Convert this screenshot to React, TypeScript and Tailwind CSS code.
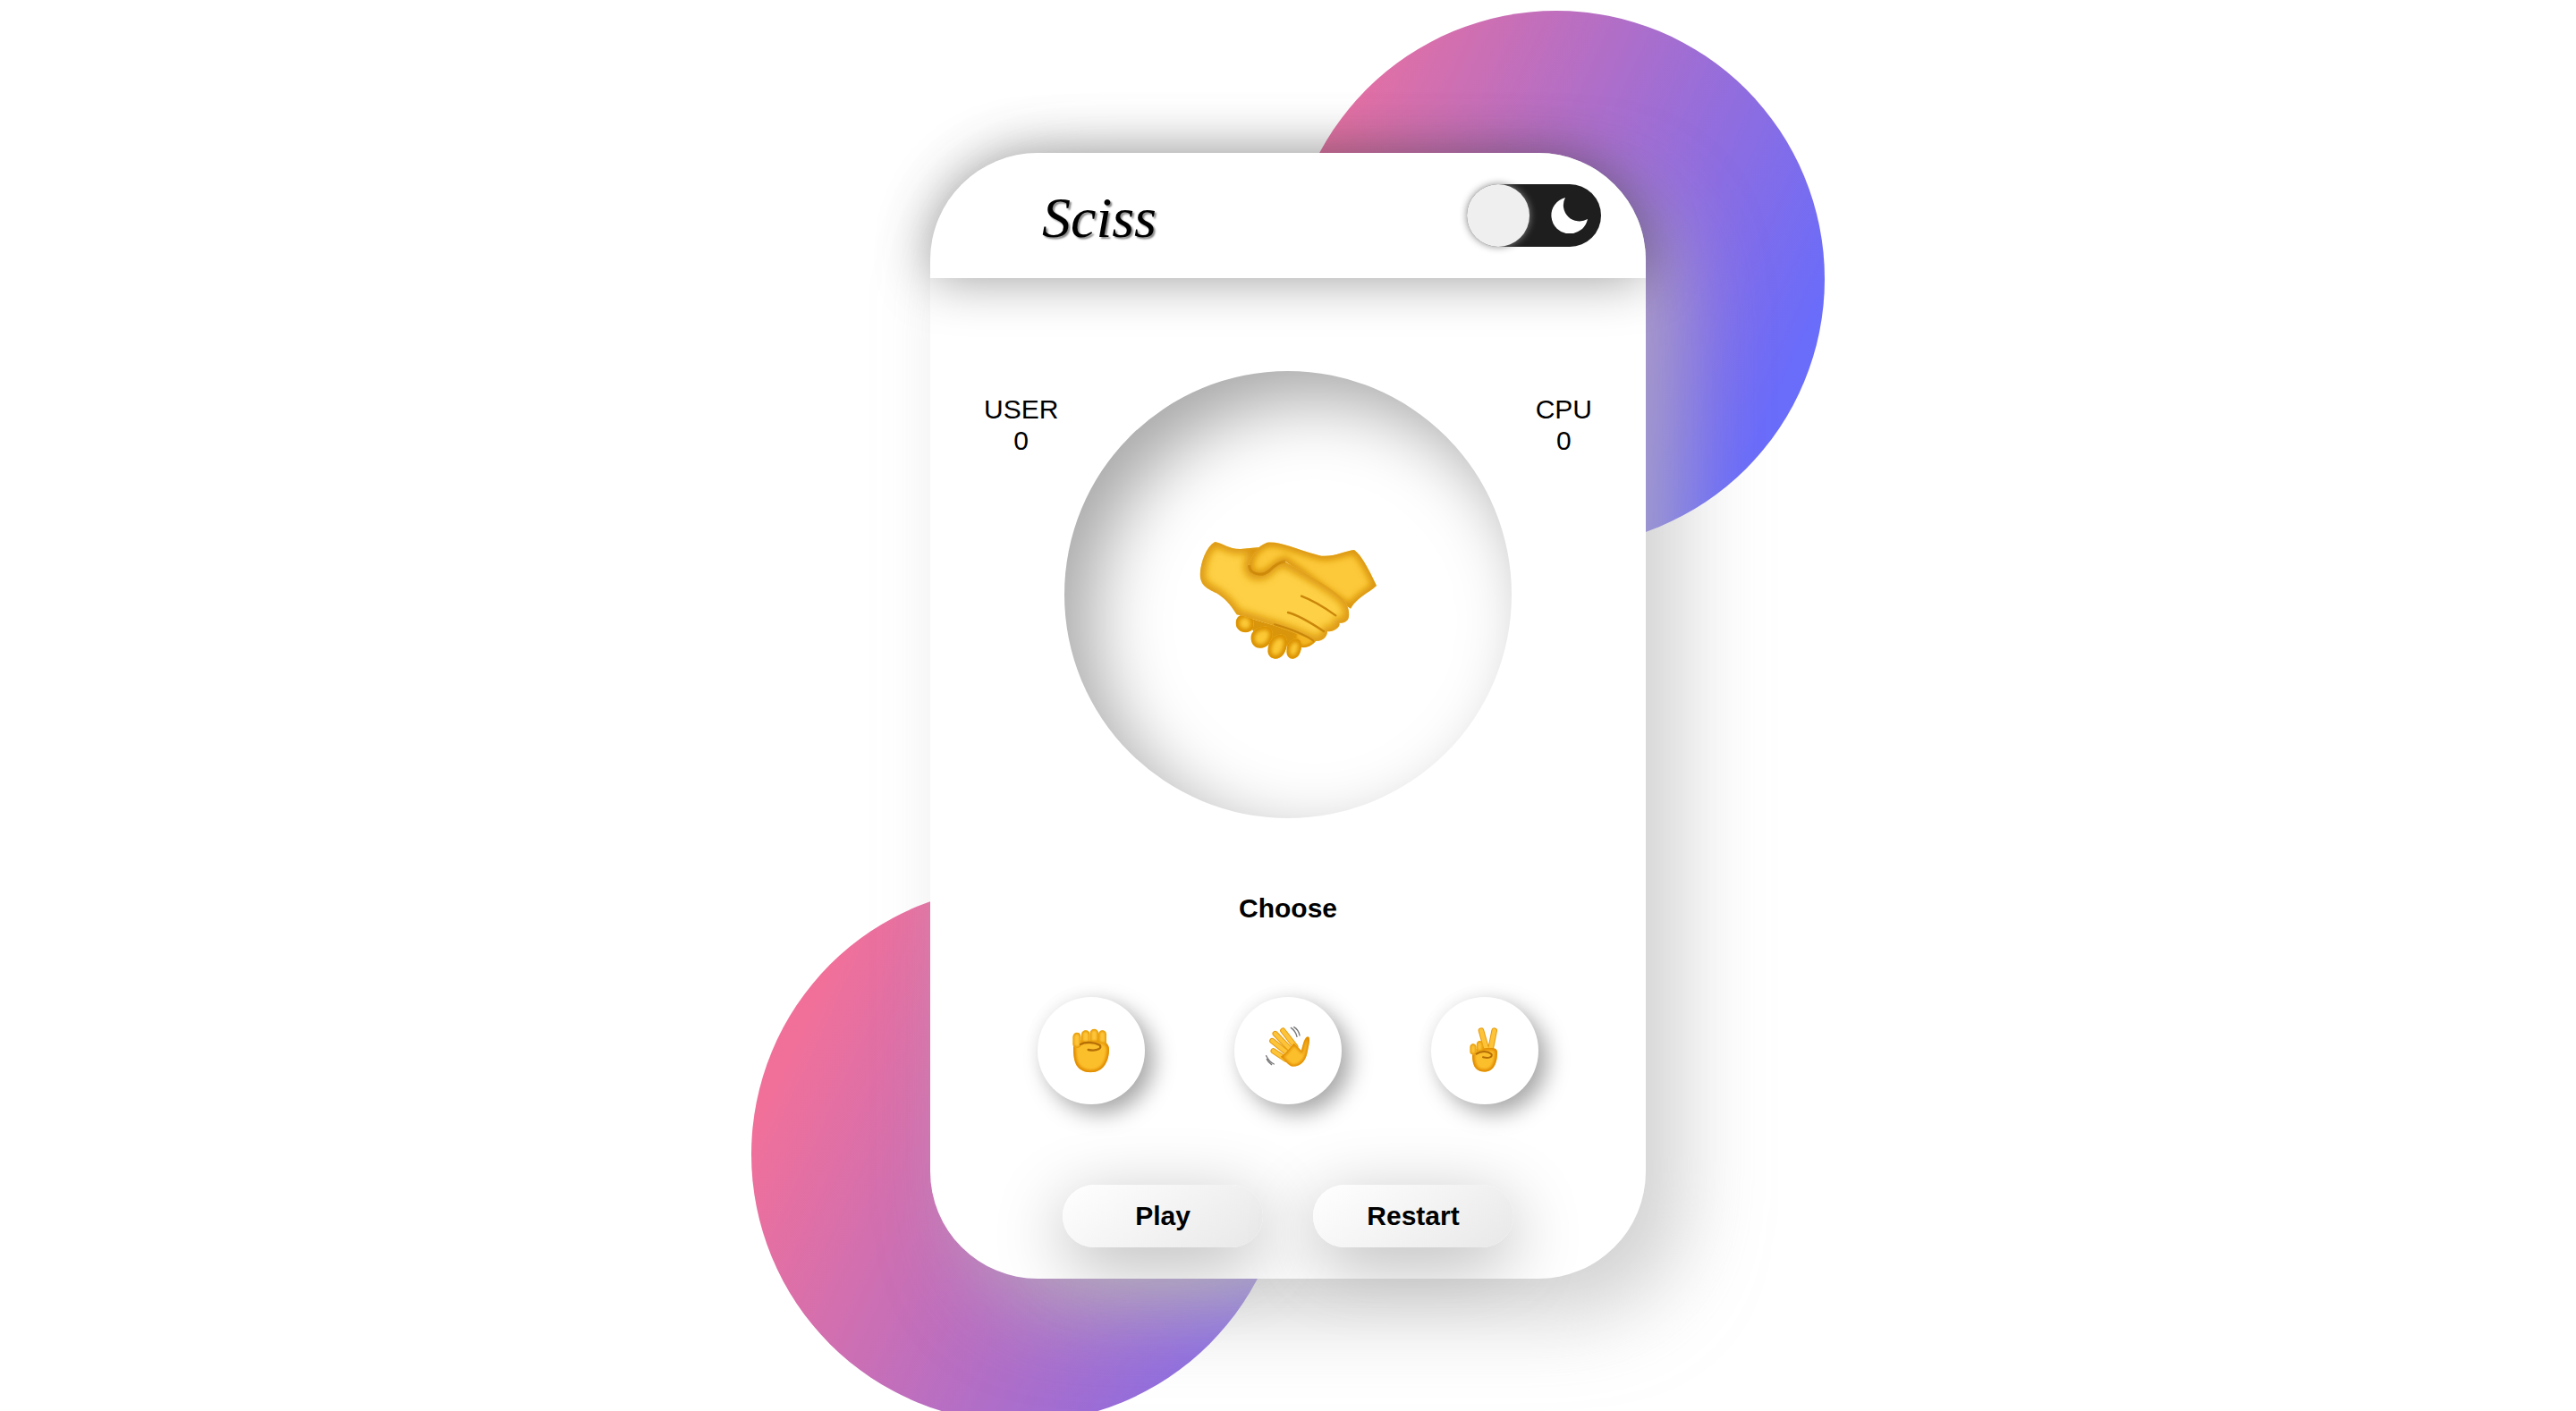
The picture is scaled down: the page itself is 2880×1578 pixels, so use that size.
import { useId } from "react";

// soft edged emoji part: flat fill with a blurred darker rim, clipped to the shape
function Soft({ d, fill = "#fcc935", rim = "#d98f06", width = 16, blur = 5 }: { d: string; fill?: string; rim?: string; width?: number; blur?: number }) {
  const id = useId().replace(/[^a-zA-Z0-9]/g, "");
  return (
    <g>
      <defs>
        <clipPath id={`c${id}`}>
          <path d={d} />
        </clipPath>
        <filter id={`f${id}`} x="-30%" y="-30%" width="160%" height="160%">
          <feGaussianBlur stdDeviation={blur} />
        </filter>
      </defs>
      <path d={d} fill={fill} />
      <g clipPath={`url(#c${id})`}>
        <path d={d} fill="none" stroke={rim} strokeWidth={width} filter={`url(#f${id})`} />
      </g>
    </g>
  );
}

function Handshake() {
  return (
    <svg width="200" height="140" viewBox="0 0 600 420" className="mt-[10px]">
      <path d="M140 265 L345 325 L335 375 L240 355 L190 325Z" fill="#d9960c" />
      <Soft d="M330 300 L400 335 C395 360 365 375 345 372 L320 340Z" width={14} blur={5} fill="#f4b622" />
      <Soft d="M125 290 C125 268 145 258 165 262 C185 268 190 295 180 312 C165 330 125 322 125 290Z" width={24} blur={7} />
      <Soft d="M176 345 C172 315 205 298 232 303 C255 310 252 340 235 362 C215 382 180 378 176 345Z" width={24} blur={7} />
      <Soft d="M232 385 C232 350 255 325 282 330 C305 338 298 375 285 395 C268 418 235 415 232 385Z" width={24} blur={7} />
      <Soft d="M295 385 C295 355 315 338 335 345 C352 355 345 385 335 400 C320 418 295 412 295 385Z" width={22} blur={7} />
      <Soft d="M170 90 C175 60 195 35 230 20 C270 15 320 40 400 62 C440 75 490 48 522 45 C550 65 575 120 597 165 C570 190 530 205 510 242 L420 180 L290 82 C265 85 245 120 215 128 C185 135 165 118 170 90Z" fill="#fcc93a" rim="#da9408" width={30} blur={11} />
      <Soft d="M55 18 C80 22 100 42 140 42 L205 36 C180 60 165 90 170 110 C180 135 215 135 235 115 C250 100 262 85 290 85 C350 120 430 160 480 205 C505 230 510 265 500 280 C490 292 480 290 472 290 C478 305 450 322 432 318 C432 340 410 355 385 350 C350 335 290 310 250 298 C205 285 160 268 128 262 C105 225 85 205 60 190 C30 175 5 165 5 125 C8 85 25 35 55 18Z" fill="#fed045" rim="#da9408" width={32} blur={12} />
      <path d="M170 100 C172 125 210 138 238 114 C252 100 265 88 288 84" stroke="#c98406" strokeWidth="9" strokeLinecap="round" fill="none" opacity="0.8" />
      <path d="M345 200 C385 215 425 240 460 265" stroke="#c9860a" strokeWidth="7" strokeLinecap="round" fill="none" />
      <path d="M300 255 C340 265 385 295 420 318" stroke="#c9860a" strokeWidth="7" strokeLinecap="round" fill="none" />
      <path d="M255 295 C290 305 350 325 385 350" stroke="#c9860a" strokeWidth="6" strokeLinecap="round" fill="none" />
    </svg>
  );
}

function Fist() {
  return (
    <svg width="60" height="70" viewBox="0 0 180 210">
      <Soft d="M30 90 C30 130 32 176 88 178 C132 178 150 140 150 100 C150 85 138 72 120 72 L50 70Z" fill="#fcbf2c" rim="#e08a04" width={16} blur={5} />
      <Soft d="M28 62 C28 40 55 38 56 60 L56 88 C52 100 30 98 28 84Z" fill="#fdc43a" rim="#e49604" width={9} blur={2.5} />
      <Soft d="M57 50 C58 32 85 32 86 50 L86 78 L57 78Z" fill="#fdc43a" rim="#e49604" width={9} blur={2.5} />
      <Soft d="M86 46 C87 28 113 28 114 46 L114 76 L86 76Z" fill="#fdc43a" rim="#e49604" width={9} blur={2.5} />
      <Soft d="M114 50 C115 32 140 32 141 50 L141 84 L114 78Z" fill="#fdc43a" rim="#e49604" width={9} blur={2.5} />
      <path d="M54 84 C70 74 100 76 118 86 C128 96 112 108 80 102" stroke="#b46e06" strokeWidth="7" strokeLinecap="round" fill="none" />
    </svg>
  );
}

function Wave() {
  const fingers = [
    [88, 38, 130, 92],
    [62, 48, 112, 100],
    [52, 72, 104, 114],
    [56, 106, 98, 134],
  ];
  return (
    <svg width="70" height="70" viewBox="0 0 210 210">
      {fingers.map((f) => (
        <line key={f[0] * f[1]} x1={f[0]} y1={f[1]} x2={f[2]} y2={f[3]} stroke="#e59a0c" strokeWidth="19" strokeLinecap="round" />
      ))}
      {fingers.map((f) => (
        <line key={f[1] * f[2]} x1={f[0]} y1={f[1]} x2={f[2]} y2={f[3]} stroke="#fdc43a" strokeWidth="13" strokeLinecap="round" />
      ))}
      <Soft d="M95 115 L125 80 L150 105 C155 85 160 60 172 58 C182 62 175 85 170 110 C166 135 150 158 120 158 C105 155 95 135 80 125Z" fill="#fcbf2c" rim="#e08a04" width={12} blur={4} />
      <path d="M115 28 C125 35 132 45 135 58 M125 26 C135 32 142 42 144 54" stroke="#777777" strokeWidth="4" strokeLinecap="round" fill="none" />
      <path d="M32 122 C38 135 46 144 58 150 M34 134 C38 142 44 148 50 152" stroke="#777777" strokeWidth="4" strokeLinecap="round" fill="none" />
    </svg>
  );
}

function Victory() {
  return (
    <svg width="60" height="70" viewBox="0 0 180 210">
      <line x1="78" y1="38" x2="98" y2="108" stroke="#e59a0c" strokeWidth="20" strokeLinecap="round" />
      <line x1="122" y1="38" x2="108" y2="108" stroke="#e59a0c" strokeWidth="20" strokeLinecap="round" />
      <line x1="78" y1="38" x2="98" y2="108" stroke="#fdc43a" strokeWidth="14" strokeLinecap="round" />
      <line x1="122" y1="38" x2="108" y2="108" stroke="#fdc43a" strokeWidth="14" strokeLinecap="round" />
      <Soft d="M48 118 C48 150 55 176 90 176 C120 176 132 145 132 112 C132 100 125 95 105 95 L60 100Z" fill="#fcbf2c" rim="#e08a04" width={16} blur={5} />
      <Soft d="M40 92 C42 78 60 78 62 92 L62 112 C58 122 42 120 40 110Z" fill="#fdc43a" rim="#e49604" width={8} blur={2.5} />
      <Soft d="M62 84 C64 68 82 68 84 84 L84 106 L62 108Z" fill="#fdc43a" rim="#e49604" width={8} blur={2.5} />
      <path d="M62 116 C78 104 100 106 112 116 C118 126 104 132 84 127" stroke="#b46e06" strokeWidth="6" strokeLinecap="round" fill="none" />
    </svg>
  );
}

function Moon() {
  return (
    <svg width="41" height="40" viewBox="0 0 41 40" fill="#ffffff">
      <path d="M16 0 A20.5 20.5 0 1 0 41 24 A18 18 0 0 1 16 0Z" />
    </svg>
  );
}

function ChoiceButton({ children }: { children: React.ReactNode }) {
  return (
    <button className="w-[120px] h-[120px] rounded-full bg-white flex items-center justify-center shadow-[10px_10px_25px_#a8a8a8,-4px_-4px_16px_#f8f8f8]">
      {children}
    </button>
  );
}

function ActionButton({ label }: { label: string }) {
  return (
    <button className="w-[224px] h-[70px] pb-[2px] rounded-full bg-[linear-gradient(145deg,#ffffff,#e8e8e8)] font-bold text-[30px] text-black shadow-[0_20px_80px_#b4b4b4]">
      {label}
    </button>
  );
}

export default function App() {
  return (
    <div className="w-full h-[1578px] overflow-hidden bg-white pt-[171px] font-['Liberation_Sans',Arial,sans-serif] text-black">
      <div className="relative w-[800px] h-[1259px] mx-auto">
        <div className="absolute left-[400px] top-[-159px] w-[600px] h-[600px] rounded-full bg-[linear-gradient(115deg,#f0709a_5%,#6a6cfa_85%)]"></div>
        <div className="absolute left-[-200px] top-[820px] w-[600px] h-[600px] rounded-full bg-[linear-gradient(115deg,#f0709a_15%,#6a6cfa_110%)]"></div>

        <div className="relative h-full rounded-[120px] bg-white flex flex-col shadow-[40px_40px_90px_rgba(184,184,184,0.65)]">
          <header className="relative z-10 h-[140px] shrink-0 rounded-t-[120px] bg-white flex items-center justify-between pl-[125px] pr-[50px] shadow-[0_0_60px_rgba(0,0,0,0.4)]">
            <span className="mt-[6px] font-['Liberation_Serif',serif] italic text-[64px] leading-none [text-shadow:2px_2px_2px_#888888]">Sciss</span>
            <div className="w-[150px] h-[70px] rounded-full bg-[#1e1e1e] flex items-center justify-between pr-[15px]">
              <div className="w-[70px] h-[70px] rounded-full bg-[#efefef] shadow-[0_0_8px_#888888]"></div>
              <Moon />
            </div>
          </header>

          <div className="grid grid-cols-[1fr_500px_1fr] mt-[104px] text-[30px]">
            <div className="pl-[60px] pt-[25px]">
              <div className="w-fit text-center leading-[35px]">
                <div>USER</div>
                <div>0</div>
              </div>
            </div>
            <div className="w-[500px] h-[500px] rounded-full bg-white flex items-center justify-center shadow-[inset_30px_30px_80px_#a8a8a8]">
              <Handshake />
            </div>
            <div className="pr-[60px] pt-[25px] flex justify-end">
              <div className="w-fit text-center leading-[35px]">
                <div>CPU</div>
                <div>0</div>
              </div>
            </div>
          </div>

          <div className="mt-[83px] text-center font-bold text-[30px] leading-[35px]">Choose</div>

          <div className="flex justify-center gap-[100px] mt-[82px]">
            <ChoiceButton><Fist /></ChoiceButton>
            <ChoiceButton><Wave /></ChoiceButton>
            <ChoiceButton><Victory /></ChoiceButton>
          </div>

          <div className="flex justify-center gap-[56px] mt-[90px]">
            <ActionButton label="Play" />
            <ActionButton label="Restart" />
          </div>
        </div>
      </div>
    </div>
  );
}
